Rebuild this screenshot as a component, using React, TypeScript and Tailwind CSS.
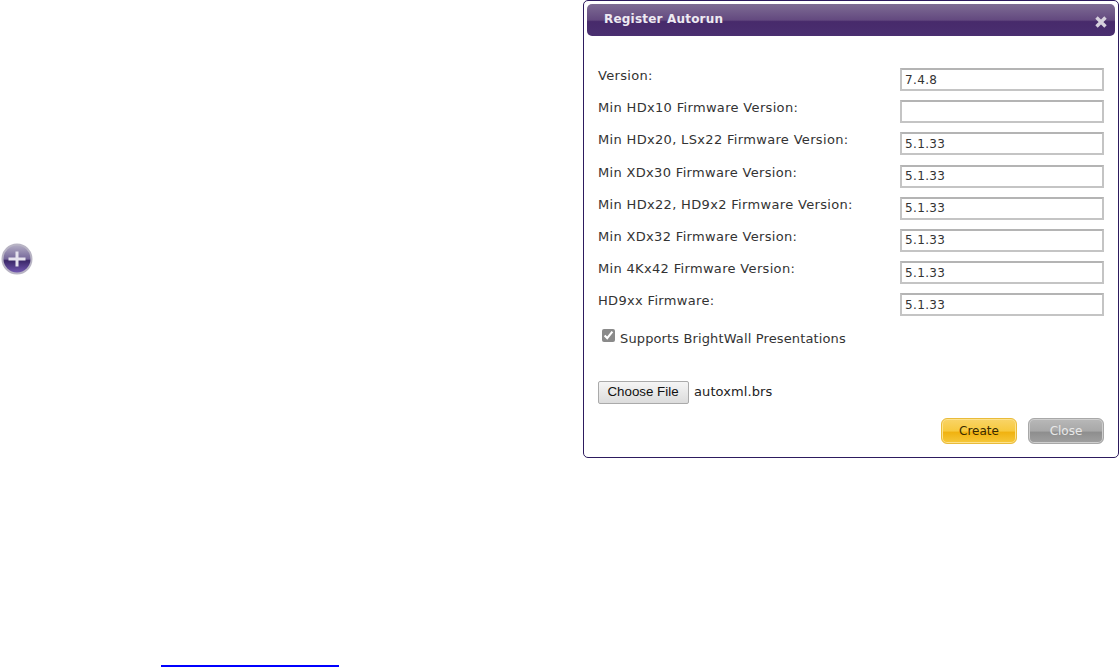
const FIELDS = [
  { label: "Version:", value: "7.4.8" },
  { label: "Min HDx10 Firmware Version:", value: "" },
  { label: "Min HDx20, LSx22 Firmware Version:", value: "5.1.33" },
  { label: "Min XDx30 Firmware Version:", value: "5.1.33" },
  { label: "Min HDx22, HD9x2 Firmware Version:", value: "5.1.33" },
  { label: "Min XDx32 Firmware Version:", value: "5.1.33" },
  { label: "Min 4Kx42 Firmware Version:", value: "5.1.33" },
  { label: "HD9xx Firmware:", value: "5.1.33" },
];

function AddButton() {
  return (
    <svg width="32" height="32" viewBox="0 0 32 32">
      <defs>
        <linearGradient id="addFill" x1="0" y1="0" x2="0" y2="1">
          <stop offset="0" stopColor="#b0aac2" />
          <stop offset="0.5" stopColor="#75679a" />
          <stop offset="0.56" stopColor="#3a2768" />
          <stop offset="1" stopColor="#7258b0" />
        </linearGradient>
      </defs>
      <circle cx="16" cy="16" r="15.5" fill="#b8b4c4" />
      <circle cx="16" cy="16" r="13.5" fill="url(#addFill)" />
      <path d="M16 8.5v15M7.5 16h17" stroke="#e6e3ee" strokeWidth="3" />
    </svg>
  );
}

function Row({ label, value }: { label: string; value: string }) {
  return (
    <div className="flex h-[32.2px] items-start justify-between">
      <label className="mt-[-1px] text-[13px] leading-[18px] tracking-[0.33px] text-[#333]">{label}</label>
      <input
        readOnly
        value={value}
        className="h-[23px] w-[204px] border-2 border-[#c4c4c4] border-t-[#b4b4b4] bg-white px-[3px] text-[12px] tracking-[0.35px] text-[#333] outline-none"
      />
    </div>
  );
}

export default function App() {
  return (
    <div className="relative h-[667px] w-[1119px] overflow-hidden bg-white font-['DejaVu_Sans','Liberation_Sans',sans-serif]">
      <div className="flex h-[667px] flex-col">
        <div className="ml-[1px] mt-[243px]">
          <AddButton />
        </div>
        <div className="ml-[161px] mt-auto h-[2px] w-[178px] bg-[#0000ff]" />
      </div>

      {/* dialog */}
      <div className="absolute left-[583px] top-0 h-[458px] w-[536px] rounded-[5px] border border-[#2d1b5e] bg-white p-[3px]">
        <div className="flex h-[32px] items-start justify-between rounded-[5px] bg-[linear-gradient(#7e6c94_0%,#63497f_50%,#472a6b_55%,#4a2f70_100%)] pl-[17px] pr-[8px]">
          <span className="mt-[7px] text-[12px] font-bold leading-[16px] tracking-[0.2px] text-[#eeeaf2]">Register Autorun</span>
          <svg className="mt-[12px]" width="12" height="12" viewBox="0 0 12 12">
            <path d="M1.5 1.5l9 9M10.5 1.5l-9 9" stroke="#d6d0dd" strokeWidth="3.4" />
          </svg>
        </div>

        <div className="flex flex-col pl-[11px] pr-[11px] pt-[32px]">
          {FIELDS.map((f) => (
            <Row key={f.label} label={f.label} value={f.value} />
          ))}

          <div className="ml-[4px] flex h-[23px] items-start gap-[5px]">
            <input type="checkbox" readOnly checked className="m-0 mt-[3px] h-[13px] w-[13px] accent-[#8a8a8a]" />
            <span className="mt-[4px] text-[13px] leading-[18px] tracking-[0.13px] text-[#333]">Supports BrightWall Presentations</span>
          </div>

          <div className="mt-[32px] flex items-center gap-[5px]">
            <button className="h-[23px] w-[91px] rounded-[2px] border border-[#aaa] bg-[linear-gradient(#f5f5f5,#dcdcdc)] pr-[1px] font-['Liberation_Sans',sans-serif] text-[13.33px] text-[#111]">
              Choose File
            </button>
            <span className="text-[13px] tracking-[0.1px] text-[#222]">autoxml.brs</span>
          </div>

          <div className="mt-[14px] flex justify-end gap-[11px]">
            <button className="h-[26px] w-[76px] rounded-[6px] border border-[#e9bb3a] bg-[linear-gradient(#f9d468_0%,#f7c93e_50%,#f0b210_55%,#f6c83a_100%)] text-[12px] text-[#3a2a00] shadow-[inset_0_0_0_1px_#fde28c]">
              Create
            </button>
            <button className="h-[26px] w-[76px] rounded-[6px] border border-[#a8a8a8] bg-[linear-gradient(#b8b8b8_0%,#a8a8a8_50%,#8e8e8e_55%,#a0a0a0_100%)] text-[12px] text-[#e8e8e8] shadow-[inset_0_0_0_1px_#cfcfcf]">
              Close
            </button>
          </div>
        </div>
      </div>
    </div>
  );
}
